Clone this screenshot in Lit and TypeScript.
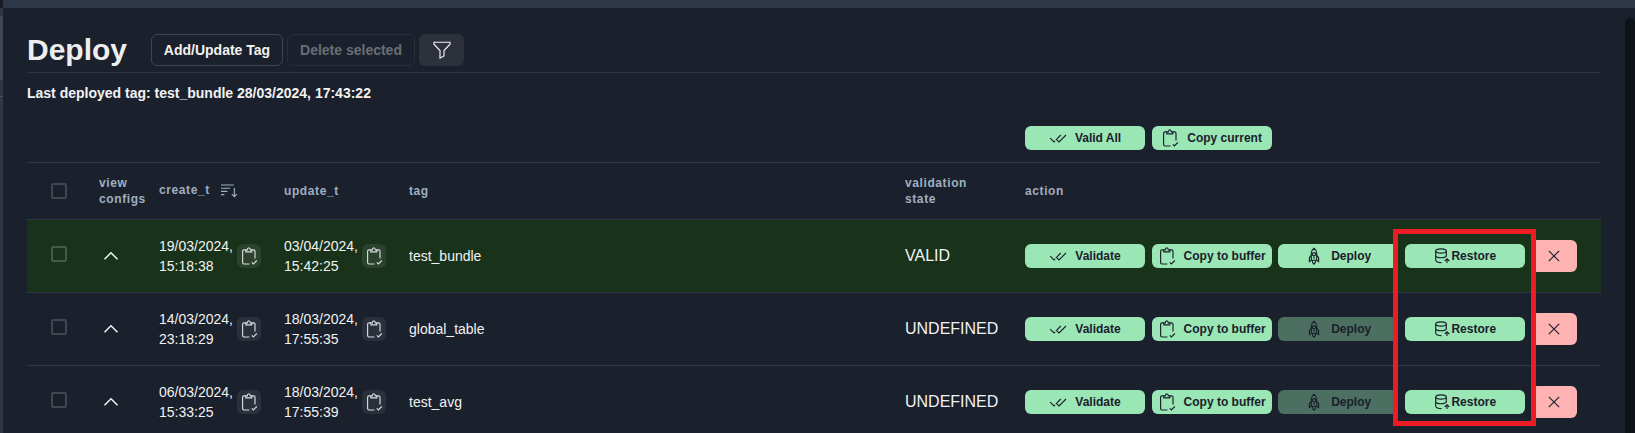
import { LitElement, html, css, svg } from "lit";
import { customElement, property } from "lit/decorators.js";
import { classMap } from "lit/directives/class-map.js";

const paths = {
  clipboard: svg`<path d="M5.8 2.8H4Q2.6 2.8 2.6 4.2V15.6Q2.6 17 4 17H9.4M11.8 2.8H13.6Q15 2.8 15 4.2V11.5"/><path d="M5.8 4.9V2.8H7.3Q7.4 .8 8.8 .8T10.3 2.8H11.8V4.9Z"/><path d="M11.8 15.3L13.4 16.9L16.8 13.5"/>`,
  checks: svg`<path d="M1.2 9.2L5 13L6.2 11.8M8 9.8L11.8 6M6.8 9.8L10 12.9L17 6"/>`,
  rocket: svg`<path d="M6.3 13.6V6.1Q6.4 3.3 9 1.3Q11.6 3.3 11.7 6.1V13.6M6.3 8L4.4 10.8V14.6L6.3 13.2H11.7M11.7 8L13.6 10.8V14.6L11.7 13.2M7.4 13.8Q7.3 15.9 9 17.2Q10.7 15.9 10.6 13.8"/><circle cx="9" cy="7.2" r="1.6"/><path d="M9 9.8V11.8"/>`,
  restore: svg`<ellipse cx="8" cy="4" rx="5.3" ry="2.1"/><path d="M2.7 4V13.4Q3.3 15.5 8.5 15.6M2.7 8.7Q3.4 10.7 8 10.8Q12.6 10.7 13.3 8.7M13.3 4V9.5M14 16V11.7M11.7 14L14 11.7L16.3 14"/>`,
  filter: svg`<path d="M1 1.2H17V3.2L11 9.5V15L7 17V9.5L1 3.2Z"/>`,
  sort: svg`<path d="M1 3H13.8M1 6.2H10.2M1 9.4H7.4M1 12.6H4.4M14.4 6V14.6M11.9 12.1L14.4 14.6L16.9 12.1"/>`,
  up: svg`<path stroke-width="1.5" d="M2.5 12.3L9 5.8L15.5 12.3"/>`,
  close: svg`<path d="M3.8 3.8L14.2 14.2M14.2 3.8L3.8 14.2"/>`,
};

@customElement("line-icon")
export class LineIcon extends LitElement {
  @property() name: keyof typeof paths = "close";
  static styles = css`
    :host { display: block; width: 18px; height: 18px; flex: none; }
    svg { display: block; width: 100%; height: 100%; fill: none; stroke: currentColor; stroke-width: 1.15; }
  `;
  render() {
    return html`<svg viewBox="0 0 18 18">${paths[this.name]}</svg>`;
  }
}

interface Row { created: string[]; updated: string[]; tag: string; state: string; live?: boolean }

const rows: Row[] = [
  { created: ["19/03/2024,", "15:18:38"], updated: ["03/04/2024,", "15:42:25"], tag: "test_bundle", state: "VALID", live: true },
  { created: ["14/03/2024,", "23:18:29"], updated: ["18/03/2024,", "17:55:35"], tag: "global_table", state: "UNDEFINED" },
  { created: ["06/03/2024,", "15:33:25"], updated: ["18/03/2024,", "17:55:39"], tag: "test_avg", state: "UNDEFINED" },
];

@customElement("app-root")
export class AppRoot extends LitElement {
  static styles = css`
    * { box-sizing: border-box; }
    :host { display: flex; position: relative; height: 433px; overflow: hidden; background: #1a202c; color: #f2f2f2; font: 14px/20px "Liberation Sans", Arial, sans-serif; }
    button { font: inherit; color: inherit; background: transparent; border: 0; padding: 0; margin: 0; display: flex; align-items: center; justify-content: center; flex: none; border-radius: 6px; white-space: nowrap; }
    .rail { width: 3px; flex: none; background: #2d3748; display: flex; flex-direction: column; }
    .rail-top { height: 8px; background: #171923; }
    .rail-item { height: 64px; margin-top: 8px; background: #3e4954; }
    .rail-line { height: 1px; margin-top: 16px; background: #4a5362; }
    .main { flex: 1; min-width: 0; border-top: 8px solid #2d3748; padding: 26px 24px 0; }
    .head { display: flex; height: 39px; border-bottom: 1px solid #2f3542; width: 1574px; }
    h1 { margin: 0; width: 124px; font-size: 30px; line-height: 32px; height: 32px; font-weight: 700; color: #eeeeee; }
    .tools { display: flex; gap: 4px; height: 32px; font-weight: 700; }
    .tools button { border: 1px solid #3f444e; height: 32px; }
    .add { width: 132px; }
    .tools .del { width: 128px; border-color: #292e39; color: #6a6e76; }
    .tools .filter { width: 45px; background: #2c313c; border: 0; }
    .last { margin: 10px 0 0; font-weight: 700; height: 20px; }
    .table { width: 1574px; margin-top: 12px; }
    .row { display: grid; grid-template-columns: 72px 60px 125px 125px 496px 120px 1fr; height: 73px; align-items: center; border-bottom: 1px solid #2d3748; }
    .row.live { background: #19331b; }
    .row.top { height: 48px; }
    .row.labels { height: 57px; color: #a0aec0; font-size: 12px; line-height: 16px; font-weight: 700; letter-spacing: 0.6px; }
    .box { width: 16px; height: 16px; margin-left: 24px; margin-bottom: 4px; border: 2px solid #42464f; border-radius: 2px; }
    .labels .box { margin-bottom: 0; }
    .live .box { border-color: #45594a; }
    .view { margin-right: 10px; }
    .sorted { display: flex; align-items: center; gap: 10px; }
    .sorted span { position: relative; top: -1px; }
    .chev { margin-left: 3px; }
    .date { display: flex; align-items: center; }
    .date div { width: 78px; flex: none; white-space: nowrap; }
    .date button { width: 24px; height: 24px; background: rgba(255, 255, 255, 0.08); color: #d9dbde; }
    .state { font-size: 16px; }
    .acts { display: flex; align-items: center; gap: 6.6px; color: #1a202c; font-size: 12px; font-weight: 700; }
    .green { width: 120px; height: 24px; background: #9ae6b4; gap: 8px; }
    .tight { gap: 0; }
    .off { opacity: 0.4; }
    .red { width: 46px; height: 32px; background: #feb2b2; }
    .top .acts { grid-column: 7; margin-top: -1px; }
    .scroll { width: 10px; flex: none; margin-top: 18px; background: #0f1218; border-radius: 5px 5px 0 0; }
    .topfill { position: absolute; top: 0; right: 0; width: 10px; height: 8px; background: #2d3748; }
    .mark { position: absolute; left: 1393px; top: 229px; width: 143px; height: 197px; border: 5px solid #ed1c24; }
  `;

  date(d: string[]) {
    return html`<div class="date"><div>${d[0]}<br />${d[1]}</div><button><line-icon name="clipboard"></line-icon></button></div>`;
  }

  green(icon: string, label: string, extra = {}) {
    return html`<button class=${classMap({ green: true, ...extra })}><line-icon name=${icon}></line-icon><span>${label}</span></button>`;
  }

  render() {
    return html`
      <div class="rail"><div class="rail-top"></div><div class="rail-item"></div><div class="rail-line"></div></div>
      <div class="main">
        <div class="head">
          <h1>Deploy</h1>
          <div class="tools">
            <button class="add">Add/Update Tag</button>
            <button class="del" disabled>Delete selected</button>
            <button class="filter"><line-icon name="filter"></line-icon></button>
          </div>
        </div>
        <p class="last">Last deployed tag: test_bundle 28/03/2024, 17:43:22</p>
        <div class="table">
          <div class="row top">
            <div class="acts">${this.green("checks", "Valid All")}${this.green("clipboard", "Copy current")}</div>
          </div>
          <div class="row labels">
            <div><div class="box"></div></div>
            <div class="view">view configs</div>
            <div class="sorted"><span>create_t</span><line-icon name="sort"></line-icon></div>
            <div>update_t</div>
            <div>tag</div>
            <div>validation<br />state</div>
            <div>action</div>
          </div>
          ${rows.map((r) => html`
            <div class=${classMap({ row: true, live: !!r.live })}>
              <div><div class="box"></div></div>
              <line-icon class="chev" name="up"></line-icon>
              ${this.date(r.created)}
              ${this.date(r.updated)}
              <div>${r.tag}</div>
              <div class="state">${r.state}</div>
              <div class="acts">
                ${this.green("checks", "Validate")}
                ${this.green("clipboard", "Copy to buffer")}
                ${this.green("rocket", "Deploy", { off: !r.live })}
                ${this.green("restore", "Restore", { tight: true })}
                <button class="red"><line-icon name="close"></line-icon></button>
              </div>
            </div>`)}
        </div>
      </div>
      <div class="scroll"></div>
      <div class="topfill"></div>
      <div class="mark"></div>
    `;
  }
}
